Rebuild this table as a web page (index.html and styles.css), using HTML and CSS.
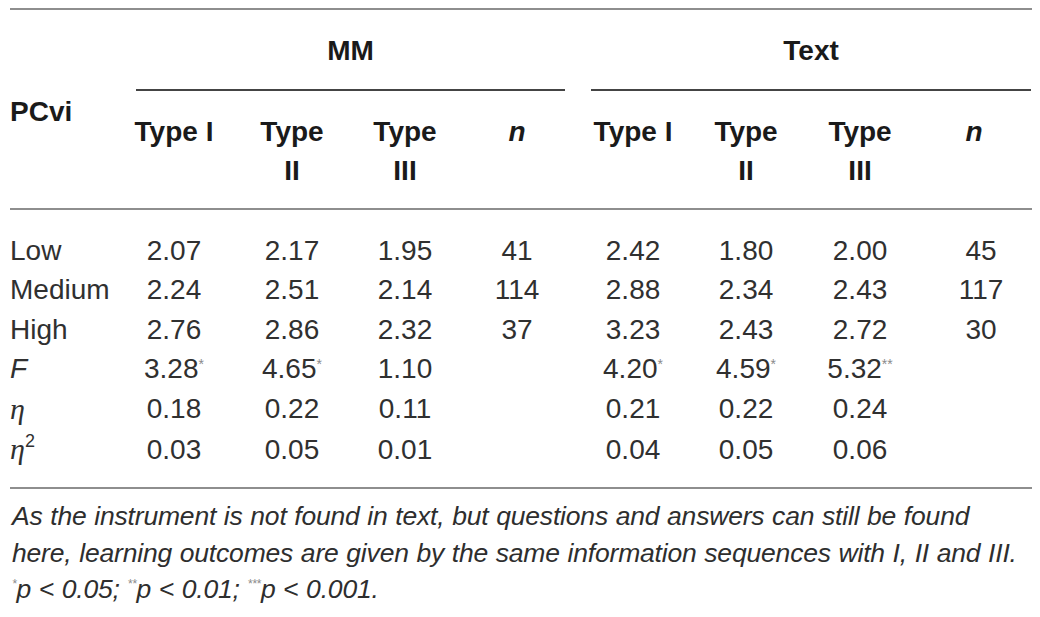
FILE: index.html
```html
<!DOCTYPE html>
<html lang="en">
<head>
    <meta charset="UTF-8">
    <title>PCvi learning outcomes</title>
    <link rel="stylesheet" href="styles.css">
</head>
<body>
    <table class="results">
        <colgroup>
            <col class="c-label">
            <col class="c1"><col class="c2"><col class="c3"><col class="c4">
            <col class="c5"><col class="c6"><col class="c7"><col class="c8">
        </colgroup>
        <thead>
            <tr>
                <th rowspan="2" class="row-head">PCvi</th>
                <th colspan="4" class="group"><div class="group-label mm">MM</div></th>
                <th colspan="4" class="group"><div class="group-label txt">Text</div></th>
            </tr>
            <tr class="sub">
                <th>Type I</th>
                <th><span class="wrap">Type<br>II</span></th>
                <th><span class="wrap">Type<br>III</span></th>
                <th><i>n</i></th>
                <th>Type I</th>
                <th><span class="wrap">Type<br>II</span></th>
                <th><span class="wrap">Type<br>III</span></th>
                <th class="last"><i>n</i></th>
            </tr>
        </thead>
        <tbody>
            <tr>
                <td class="label">Low</td>
                <td>2.07</td><td>2.17</td><td>1.95</td><td>41</td>
                <td>2.42</td><td>1.80</td><td>2.00</td><td class="last">45</td>
            </tr>
            <tr>
                <td class="label">Medium</td>
                <td>2.24</td><td>2.51</td><td>2.14</td><td>114</td>
                <td>2.88</td><td>2.34</td><td>2.43</td><td class="last">117</td>
            </tr>
            <tr>
                <td class="label">High</td>
                <td>2.76</td><td>2.86</td><td>2.32</td><td>37</td>
                <td>3.23</td><td>2.43</td><td>2.72</td><td class="last">30</td>
            </tr>
            <tr>
                <td class="label"><i>F</i></td>
                <td>3.28<sup>*</sup></td><td>4.65<sup>*</sup></td><td>1.10</td><td></td>
                <td>4.20<sup>*</sup></td><td>4.59<sup>*</sup></td><td>5.32<sup>**</sup></td><td class="last"></td>
            </tr>
            <tr>
                <td class="label"><span class="eta">η</span></td>
                <td>0.18</td><td>0.22</td><td>0.11</td><td></td>
                <td>0.21</td><td>0.22</td><td>0.24</td><td class="last"></td>
            </tr>
            <tr>
                <td class="label"><span class="eta">η</span><sup class="sq">2</sup></td>
                <td>0.03</td><td>0.05</td><td>0.01</td><td></td>
                <td>0.04</td><td>0.05</td><td>0.06</td><td class="last"></td>
            </tr>
        </tbody>
    </table>

    <p class="note">
        As the instrument is not found in text, but questions and answers can still be found<br>
        here, learning outcomes are given by the same information sequences with I, II and III.<br>
        <sup>*</sup>p &lt; 0.05; <sup>**</sup>p &lt; 0.01; <sup>***</sup>p &lt; 0.001.
    </p>
</body>
</html>
```

FILE: styles.css
```css
body {
    margin: 0;
    padding: 8px 8px 0 10px;
    background: #fff;
    color: #303030;
    font-family: "Liberation Sans", Arial, sans-serif;
}

.results {
    width: 1022px;
    table-layout: fixed;
    border-collapse: collapse;
    border-spacing: 0;
    border-top: 2px solid #8e8e8e;
    border-bottom: 2px solid #8e8e8e;
    font-size: 28px;
    line-height: 39.4px;
}
.c-label { width: 108px; }
.c1 { width: 112px; }
.c2 { width: 124px; }
.c3 { width: 102px; }
.c4 { width: 122px; }
.c5 { width: 110px; }
.c6 { width: 116px; }
.c7 { width: 112px; }
.c8 { width: 116px; }

thead {
    border-bottom: 2px solid #8e8e8e;
}
th {
    padding: 0;
    font-weight: bold;
    color: #1a1a1a;
    text-align: center;
    vertical-align: top;
    line-height: 39px;
}
th.row-head {
    text-align: left;
    vertical-align: middle;
    padding-top: 4px;
}
th.group {
    padding-top: 21px;
}
.group-label {
    padding-bottom: 19px;
    border-bottom: 2px solid #444;
}
.group-label.mm { margin: 0 13px 0 18px; }
.group-label.txt { margin: 0 1px 0 13px; }

.sub th {
    padding: 21px 0 18px;
}
.wrap {
    display: inline-block;
    text-align: center;
}

td {
    padding: 0;
    text-align: center;
    font-weight: normal;
}
td.label {
    text-align: left;
}
.last {
    padding-left: 14px;
}
tbody tr:first-child td {
    padding-top: 21px;
}
tbody tr:last-child td {
    padding-bottom: 18px;
}

sup {
    font-size: 14px;
    line-height: 0;
    vertical-align: 9px;
    color: #8a8a8a;
}
.eta {
    font-family: "Liberation Serif", "Times New Roman", serif;
    font-style: italic;
    font-size: 30px;
}
sup.sq {
    font-size: 18px;
    color: #303030;
    vertical-align: 12px;
}

.note {
    margin: 9px 0 0 2px;
    font-size: 26.5px;
    line-height: 36.5px;
    font-style: italic;
    color: #2e2e2e;
    letter-spacing: -0.18px;
    word-spacing: 0.5px;
}
.note sup {
    font-size: 12px;
    vertical-align: 10px;
}
```
